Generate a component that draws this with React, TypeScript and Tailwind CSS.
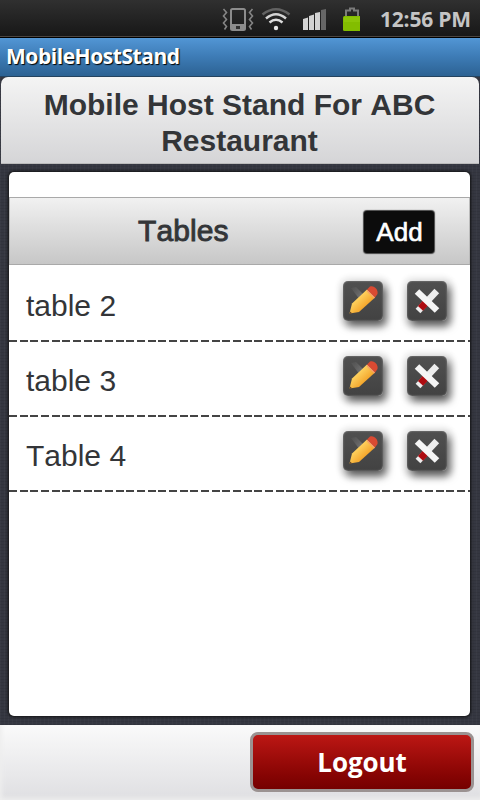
import React from "react";

const tables = ["table 2", "table 3", "Table 4"];

function StatusBar() {
  return (
    <div className="flex h-[38px] shrink-0 justify-end border-b border-black bg-gradient-to-b from-[#303030] to-[#171717] shadow-[inset_0_-1px_0_#4b4540]">
      <svg className="h-[37px] w-[150px] shrink-0" viewBox="210 0 150 37" fill="none">
        <rect x="231" y="9" width="14" height="21" rx="1.5" stroke="#8c8c8c" strokeWidth="2" />
        <path d="M231 24h14v6h-14z" fill="#8c8c8c" />
        <rect x="236" y="26" width="4" height="3" fill="#303030" />
        <path d="M223.500 9l3 3.500l-3 3.500l3 3.500l-3 3.500l3 3.500l-2 3" stroke="#858585" strokeWidth="1.600" />
        <path d="M252.500 9l-3 3.500l3 3.500l-3 3.500l3 3.500l-3 3.500l2 3" stroke="#858585" strokeWidth="1.600" />
        <path d="M262.500 14.500Q276 4 289.500 14.500" stroke="#626262" strokeWidth="2.500" />
        <path d="M266 18.500Q276 10 286 18.500" stroke="#d4d4d4" strokeWidth="2.500" />
        <path d="M269.500 22.500Q276 17 282.500 22.500" stroke="#dedede" strokeWidth="2.500" />
        <circle cx="276" cy="28" r="2.200" fill="#e8e8e8" />
        <path d="M303 19l5-1.500V30h-5zM309 16l5-1.500V30h-5zM315 13l5-1V30h-5z" fill="#d2d2d2" />
        <path d="M321 10l5-1v21h-5z" fill="#666" />
        <path d="M346 17v-6.500h4v-2h4v2h4V17" stroke="#7b7b7b" strokeWidth="2" />
        <rect x="343" y="16" width="18" height="15" rx="1.500" fill="#83bd00" />
        <path d="M344 17h16v5h-16z" fill="#8cc508" />
      </svg>
      <div className="h-[37px] w-[120px] whitespace-nowrap pl-[20px] pt-[4px] font-['Open_Sans','Noto_Sans',sans-serif] text-[21px] font-bold leading-[30px] tracking-[-0.2px] text-[#c5c5c5]">12:56 PM</div>
    </div>
  );
}

function IconTile({ children }: { children: React.ReactNode }) {
  return (
    <button className="flex size-10 shrink-0 rounded-[5px] bg-gradient-to-b from-[#505050] to-[#424242] shadow-[3px_5px_9px_rgba(0,0,0,0.65),1px_1px_5px_6px_rgba(0,0,0,0.06),inset_0_0_2px_#999]">
      {children}
    </button>
  );
}

function Pencil() {
  return (
    <svg className="size-10" viewBox="0 0 40 40">
      <defs>
        <linearGradient id="wood" x1="0" y1="0" x2="1" y2="1">
          <stop offset="0.300" stopColor="#ffd765" />
          <stop offset="0.700" stopColor="#f3a126" />
        </linearGradient>
        <linearGradient id="glint" x1="0" y1="0" x2="1" y2="1">
          <stop offset="0" stopColor="#777" stopOpacity="0.100" />
          <stop offset="1" stopColor="#aaa" stopOpacity="0.600" />
        </linearGradient>
      </defs>
      <path d="M8 7l5-1l8 8l-4 5z" fill="url(#glint)" />
      <path d="M6.500 32.500l2.500-10L24 8.500l8 8L16 31z" fill="url(#wood)" />
      <path d="M24 8.500l3-3c4-1.500 8.500 3 7.500 7.500L32 16.500z" fill="#d94a32" />
      <path d="M24 9.500l7.500 7.500" stroke="#f6a06a" strokeWidth="1.500" />
      <path d="M6.500 33l0.700-2.500l1.800 1.800z" fill="#65472a" />
    </svg>
  );
}

function Cross() {
  return (
    <svg className="size-10" viewBox="0 0 40 40">
      <path d="M29.800 10L11 30" stroke="#ededed" strokeWidth="6.500" />
      <path d="M18.500 22L13.500 27.300" stroke="#ad0b10" strokeWidth="7" />
      <path d="M10 10.500L30 29.500" stroke="#f5f5f5" strokeWidth="6.500" />
    </svg>
  );
}

export default function App() {
  return (
    <div className="flex h-[800px] w-[480px] flex-col overflow-hidden bg-[#353741] font-['Liberation_Sans',Arial,sans-serif] text-[#333538] [font-kerning:none]">
      <StatusBar />
      <div className="h-[39px] shrink-0 border-b border-[#24435f] bg-gradient-to-b from-[#5296d5] via-[#3d7bb5] to-[#2c6293] pl-[6px] pt-[3px] font-['Open_Sans','Noto_Sans',sans-serif] text-[21px] font-bold leading-[30px] tracking-[-0.45px] text-white [text-shadow:1px_1px_1px_#000]">
        MobileHostStand
      </div>
      <main className="flex h-[648px] shrink-0 flex-col bg-[repeating-linear-gradient(90deg,rgba(255,255,255,0.025)_0_1px,transparent_1px_4px),repeating-linear-gradient(0deg,rgba(0,0,0,0.07)_0_1px,transparent_1px_3px)]">
        <h1 className="mx-px h-[87px] shrink-0 rounded-t-[7px] border-b border-[#bbb] bg-gradient-to-b from-[#f4f4f4] to-[#d5d5d7] pr-px pt-[10px] text-center text-[30px] font-bold leading-9">
          Mobile Host Stand For ABC<br />Restaurant
        </h1>
        <section className="ml-[9px] mr-[10px] mt-2 flex h-[544px] flex-col rounded-[5px] bg-white pt-[25px] shadow-[0_0_3px_1px_#111]">
          <div className="flex h-[68px] shrink-0 items-start border-y border-[#a9a9a9] bg-gradient-to-b from-[#f1f1f1] to-[#c7c7c7] shadow-[inset_1px_0_#bbb,inset_-1px_0_#bbb]">
            <h2 className="w-[355px] pl-[129px] pt-[15px] text-[30px] font-normal leading-9 tracking-[0.1px] [-webkit-text-stroke:0.9px_#333538]">Tables</h2>
            <button className="mt-[13px] h-[42px] w-[70px] rounded-[3px] bg-[#0c0c0c] pl-px text-[26px] leading-[42px] text-white shadow-[0_0_1px_1px_#444] [-webkit-text-stroke:0.6px_white]">Add</button>
          </div>
          <ul>
            {tables.map((name) => (
              <li key={name}>
                <div className="flex h-[75px] items-start pl-[17px] pr-[23px] pt-[16px]">
                  <span className="flex-1 pt-[7px] text-[30px] leading-9">{name}</span>
                  <div className="flex gap-6">
                    <IconTile><Pencil /></IconTile>
                    <IconTile><Cross /></IconTile>
                  </div>
                </div>
                <div className="-mb-[2px] h-[2px] bg-[repeating-linear-gradient(90deg,#444_0_8px,white_8px_10.67px)]" />
              </li>
            ))}
          </ul>
        </section>
      </main>
      <footer className="flex h-[75px] shrink-0 justify-end bg-gradient-to-b from-[#fafafa] to-[#dfdfe2] pr-[6px] pt-[7px] shadow-[inset_2px_-2px_4px_#eee]">
        <button className="h-[60px] w-[224px] rounded-[8px] border-[3px] border-[#9b9291] bg-gradient-to-b from-[#bc1714] to-[#750000] font-['Open_Sans','Noto_Sans',sans-serif] text-[26px] font-bold tracking-[-0.1px] text-white">Logout</button>
      </footer>
    </div>
  );
}
